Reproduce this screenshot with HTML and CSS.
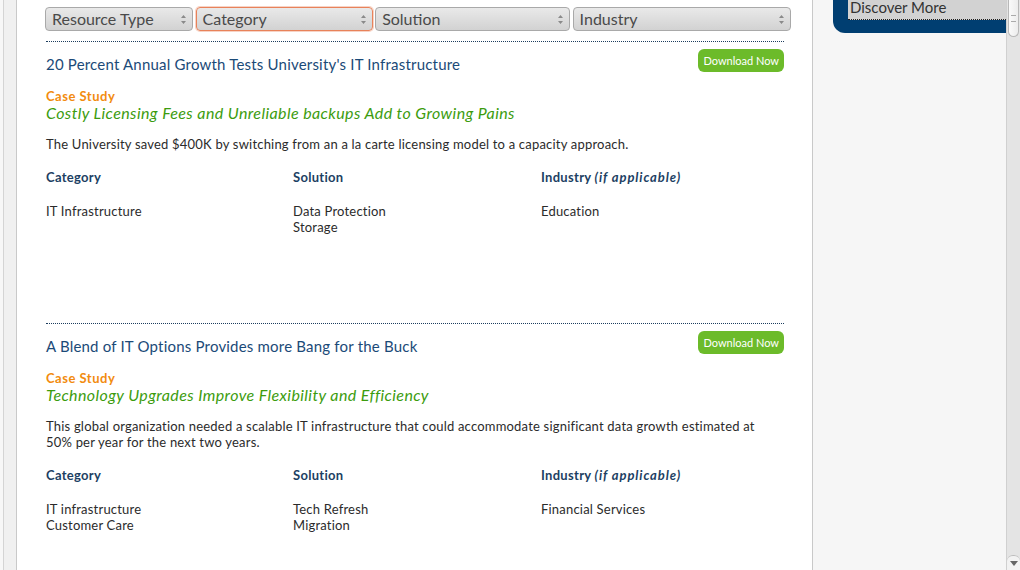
FILE: index.html
```html
<!DOCTYPE html>
<html lang="en">
<head>
    <meta charset="UTF-8">
    <meta name="viewport" content="width=device-width, initial-scale=1.0">
    <title>Resource Library</title>
    <link rel="stylesheet" href="styles.css">
</head>
<body>
    <div class="page">
        <div class="gutter"><div class="gutter-band"></div></div>

        <div class="main">
            <div class="filters">
                <div class="select w-type">Resource Type<span class="arrows"><svg width="7" height="11" viewBox="0 0 7 11"><path d="M3.5 1 L6 4 L1 4 Z M3.5 10 L6 7 L1 7 Z" fill="#8a8a8a"/></svg></span></div>
                <div class="select w-cat focused">Category<span class="arrows"><svg width="7" height="11" viewBox="0 0 7 11"><path d="M3.5 1 L6 4 L1 4 Z M3.5 10 L6 7 L1 7 Z" fill="#8a8a8a"/></svg></span></div>
                <div class="select w-sol">Solution<span class="arrows"><svg width="7" height="11" viewBox="0 0 7 11"><path d="M3.5 1 L6 4 L1 4 Z M3.5 10 L6 7 L1 7 Z" fill="#8a8a8a"/></svg></span></div>
                <div class="select w-ind">Industry<span class="arrows"><svg width="7" height="11" viewBox="0 0 7 11"><path d="M3.5 1 L6 4 L1 4 Z M3.5 10 L6 7 L1 7 Z" fill="#8a8a8a"/></svg></span></div>
            </div>

            <div class="resource">
                <div class="resource-head">
                    <h3 class="resource-title">20 Percent Annual Growth Tests University's IT Infrastructure</h3>
                    <a class="download-btn" href="#">Download Now</a>
                </div>
                <div class="resource-type">Case Study</div>
                <div class="resource-sub">Costly Licensing Fees and Unreliable backups Add to Growing Pains</div>
                <p class="resource-desc">The University saved $400K by switching from an a la carte licensing model to a capacity approach.</p>
                <div class="meta">
                    <div class="meta-col">
                        <div class="meta-label">Category</div>
                        <div class="meta-values">IT Infrastructure</div>
                    </div>
                    <div class="meta-col">
                        <div class="meta-label">Solution</div>
                        <div class="meta-values">Data Protection<br>Storage</div>
                    </div>
                    <div class="meta-col">
                        <div class="meta-label">Industry <em>(if applicable)</em></div>
                        <div class="meta-values">Education</div>
                    </div>
                </div>
            </div>

            <div class="resource">
                <div class="resource-head">
                    <h3 class="resource-title">A Blend of IT Options Provides more Bang for the Buck</h3>
                    <a class="download-btn" href="#">Download Now</a>
                </div>
                <div class="resource-type">Case Study</div>
                <div class="resource-sub">Technology Upgrades Improve Flexibility and Efficiency</div>
                <p class="resource-desc">This global organization needed a scalable IT infrastructure that could accommodate significant data growth estimated at 50% per year for the next two years.</p>
                <div class="meta">
                    <div class="meta-col">
                        <div class="meta-label">Category</div>
                        <div class="meta-values">IT infrastructure<br>Customer Care</div>
                    </div>
                    <div class="meta-col">
                        <div class="meta-label">Solution</div>
                        <div class="meta-values">Tech Refresh<br>Migration</div>
                    </div>
                    <div class="meta-col">
                        <div class="meta-label">Industry <em>(if applicable)</em></div>
                        <div class="meta-values">Financial Services</div>
                    </div>
                </div>
            </div>
        </div>

        <div class="sidebar">
            <div class="discover-box">
                <a class="discover-link" href="#">Discover More</a>
            </div>
        </div>

        <div class="scrollbar">
            <div class="scroll-thumb"><span class="grip"></span></div>
            <div class="scroll-track"></div>
            <div class="scroll-down"><svg width="8" height="5" viewBox="0 0 8 5"><path d="M0 0 L8 0 L4 5 Z" fill="#666"/></svg></div>
        </div>
    </div>
</body>
</html>
```

FILE: styles.css
```css
body {
    margin: 0;
    background-color: #f7f7f7;
    font-family: 'Lato', 'Liberation Sans', sans-serif;
    color: #333;
    height: 570px;
    overflow: hidden;
}
.page {
    display: flex;
    height: 570px;
}
.gutter {
    width: 16px;
    padding-left: 3px;
    box-sizing: border-box;
}
.gutter-band {
    height: 100%;
    background-color: #f0f0f0;
    border-left: 1px solid #d4d4d4;
}
.main {
    width: 797px;
    box-sizing: border-box;
    background: #fff;
    border-left: 1px solid #c9c9c9;
    border-right: 1px solid #c9c9c9;
    padding: 7px 28px 0 29px;
    letter-spacing: 0.2px;
}
.filters {
    display: flex;
    gap: 2px;
    margin-left: -1px;
    margin-right: -7px;
    padding-bottom: 10px;
    letter-spacing: 0;
}
.select {
    position: relative;
    height: 24px;
    box-sizing: border-box;
    border: 1px solid #a9a9a9;
    border-radius: 4px;
    background: linear-gradient(#e9e9e9, #d2d2d2);
    color: #4a4a4a;
    font-size: 16px;
    line-height: 22px;
    padding-left: 6px;
}
.select.focused {
    border-color: #e8825a;
    box-shadow: 0 0 0 1px rgba(232, 130, 90, 0.35);
}
.w-type { width: 148px; }
.w-cat { width: 178px; margin-left: 1px; }
.w-sol { width: 195px; }
.w-ind { width: 219px; margin-left: 1px; }
.arrows {
    position: absolute;
    right: 5px;
    top: 6px;
    line-height: 0;
}
.resource {
    border-top: 1px dotted #1c3d5e;
    min-height: 282px;
    box-sizing: border-box;
}
.resource-head {
    display: flex;
    justify-content: space-between;
    align-items: flex-start;
    padding-top: 7px;
}
.resource-title {
    margin: 5px 0 0;
    font-size: 15px;
    font-weight: normal;
    line-height: 20px;
    color: #1b4a78;
}
.download-btn {
    display: block;
    height: 23px;
    line-height: 23px;
    padding: 0 5px;
    background-color: #6cbb2a;
    color: #fff;
    font-size: 11px;
    letter-spacing: 0;
    text-decoration: none;
    border-radius: 6px;
}
.resource-type {
    margin-top: 14px;
    font-size: 13px;
    font-weight: bold;
    line-height: 16px;
    letter-spacing: 0.5px;
    color: #f28c0f;
}
.resource-sub {
    font-size: 16px;
    font-style: italic;
    line-height: 17px;
    letter-spacing: 0.4px;
    color: #3c9c0e;
}
.resource-desc {
    margin: 15px 0 0;
    font-size: 13px;
    line-height: 16px;
    color: #2b2b2b;
}
.meta {
    display: grid;
    grid-template-columns: 247px 248px 1fr;
    margin-top: 17px;
    font-size: 13px;
    line-height: 16px;
}
.meta-label {
    font-weight: bold;
    letter-spacing: 0.3px;
    color: #1d3f63;
}
.meta-label em {
    letter-spacing: 0.9px;
}
.meta-values {
    margin-top: 18px;
    color: #2b2b2b;
}
.sidebar {
    width: 193px;
    background-color: #f6f6f6;
}
.discover-box {
    margin-left: 20px;
    margin-right: -14px;
    background-color: #003e71;
    border-bottom-left-radius: 12px;
    padding: 0 0 13px 15px;
}
.discover-link {
    display: block;
    height: 20px;
    box-sizing: border-box;
    background-color: #d2d2d2;
    border-bottom: 1px dotted #222;
    padding-left: 2px;
    color: #333;
    font-size: 15px;
    line-height: 15px;
    text-decoration: none;
}
.scrollbar {
    width: 14px;
    display: flex;
    flex-direction: column;
    background-color: #e4e4e4;
    border-left: 1px solid #d0d0d0;
    box-sizing: border-box;
}
.scroll-thumb {
    height: 36px;
    margin: 0 1px;
    background: linear-gradient(90deg, #fafafa, #ececec);
    border: 1px solid #b8b8b8;
    border-radius: 0 0 6px 6px;
    border-top: none;
    display: flex;
    align-items: center;
    justify-content: center;
}
.grip {
    width: 5px;
    height: 5px;
    border-top: 1px solid #aaa;
    border-bottom: 1px solid #aaa;
}
.scroll-track {
    flex: 1;
}
.scroll-down {
    height: 14px;
    background-color: #f2f2f2;
    border-top: 1px solid #bdbdbd;
    border-radius: 6px 6px 0 0;
    display: flex;
    align-items: center;
    justify-content: center;
}
```
